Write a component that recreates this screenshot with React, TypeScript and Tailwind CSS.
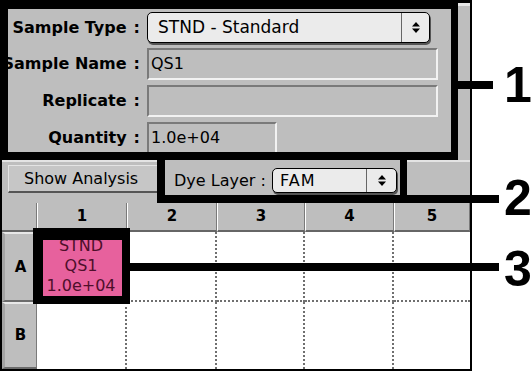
import React from 'react';

function Arrows() {
  return (
    <svg width="8" height="11" viewBox="0 0 8 11">
      <path d="M4 0 L8 4.5 H0 Z" fill="#000" />
      <path d="M4 11 L8 6.5 H0 Z" fill="#000" />
    </svg>
  );
}

interface PopupProps {
  value: string;
  size: string;
  arrowW: string;
  textClass?: string;
}

function Popup({ value, size, arrowW, textClass = '' }: PopupProps) {
  return (
    <div className={`${size} flex rounded-[5px] border-[1.5px] border-black bg-[#ebebeb] shadow-[1px_2px_0_#555] overflow-hidden`}>
      <div className={`flex-1 flex items-center whitespace-nowrap ${textClass}`}>{value}</div>
      <div className={`${arrowW} border-l border-[#666] flex items-center justify-center`}>
        <Arrows />
      </div>
    </div>
  );
}

function Field({ value, w }: { value?: string; w: string }) {
  return (
    <div
      className={`${w} h-[32px] shrink-0 border-2 border-t-[#7a7a7a] border-l-[#7a7a7a] border-b-[#f2f2f2] border-r-[#f2f2f2] flex items-center pl-[2px] text-[16px]`}
    >
      {value}
    </div>
  );
}

function Row({ label, children }: { label: string; children: React.ReactNode }) {
  return (
    <div className="flex items-center shrink-0">
      <div className="w-[132px] shrink-0 flex justify-end whitespace-nowrap font-bold text-[16px]">
        <span>{label}</span>
        <span className="ml-[7px]">:</span>
      </div>
      <div className="ml-[7px]">{children}</div>
    </div>
  );
}

const cols = ['1', '2', '3', '4', '5'];

export default function App() {
  return (
    <div className="relative w-[532px] h-[371px] bg-white flex overflow-hidden font-['DejaVu_Sans',sans-serif] text-black">
      {/* screenshot */}
      <div className="w-[472px] h-[371px] flex flex-col bg-[#bebebe] border-l-2 border-r-2 border-b-2 border-black">
        {/* sample settings panel */}
        <div className="flex h-[160px] shrink-0">
          <div className="w-[456px] h-[160px] border-t-[9px] border-l-[6px] border-r-[7px] border-b-[8px] border-black bg-[#bebebe] overflow-hidden flex flex-col pt-[3px] gap-[5px]">
            <Row label="Sample Type">
              <Popup
                value="STND - Standard"
                size="w-[283px] h-[31px]"
                arrowW="w-[28px]"
                textClass="pl-[10px] text-[17px]"
              />
            </Row>
            <Row label="Sample Name">
              <Field value="QS1" w="w-[291px]" />
            </Row>
            <Row label="Replicate">
              <Field w="w-[291px]" />
            </Row>
            <Row label="Quantity">
              <Field value="1.0e+04" w="w-[130px]" />
            </Row>
          </div>
          <div className="flex-1 border-t-[3px] border-black">
            <div className="h-[3px] bg-[#e8e8e8]" />
          </div>
        </div>

        {/* toolbar */}
        <div className="flex h-[43px] shrink-0">
          <div className="w-[155px] pl-[6px] pt-[3px] border-t-2 border-t-[#e4e4e4]">
            <div className="h-[28px] border-t border-l border-t-[#e4e4e4] border-l-[#e4e4e4] border-b-2 border-b-[#555] bg-[#c6c6c6] pl-[15px] flex items-center text-[16px] whitespace-nowrap">
              Show Analysis
            </div>
          </div>
          <div className="w-[250px] border-l-[8px] border-r-[7px] border-b-[8px] border-black pt-[8px] pl-[9px]">
            <div className="flex items-center h-[25px]">
              <div className="w-[98px] text-[16px] whitespace-nowrap">Dye Layer :</div>
              <Popup
                value="FAM"
                size="w-[125px] h-[25px]"
                arrowW="w-[30px]"
                textClass="tracking-[1px] pl-[7px] text-[16px]"
              />
            </div>
          </div>
          <div className="flex-1 border-t-2 border-t-[#e4e4e4]" />
        </div>

        {/* plate grid */}
        <div className="relative flex-1 grid grid-cols-[35px_90px_90px_88px_89px_1fr] grid-rows-[29px_70px_1fr]">
          <div className="bg-[#bebebe] border-b-2 border-b-[#666] border-r border-r-[#7a7a7a]" />
          {cols.map((c) => (
            <div
              key={c}
              className="bg-[#bebebe] border-l border-l-white border-r border-r-[#7a7a7a] border-b-2 border-b-[#666] flex items-center justify-center font-bold text-[15px]"
            >
              {c}
            </div>
          ))}

          {['A', 'B'].map((r, ri) => (
            <React.Fragment key={r}>
              <div className="bg-[#bebebe] border-t-2 border-t-[#e8e8e8] border-b-2 border-b-[#6b6b6b] border-r border-r-[#7a7a7a] border-l-[3px] border-l-[#a4a4a4] flex items-center justify-center font-bold text-[15px]">
                {r}
              </div>
              {cols.map((c, ci) => {
                const isLast = ci === cols.length - 1;
                const borders = `${isLast ? '' : 'border-r-2'} ${ri === 0 ? 'border-b-2' : ''} border-dotted border-[#6f6f6f]`;
                if (r === 'A' && c === '1') {
                  return (
                    <div
                      key={c}
                      className={`bg-[#e7619d] ${borders} flex flex-col items-center justify-center text-[16px] leading-[20px] text-[#4e0f2b]`}
                    >
                      <span>STND</span>
                      <span>QS1</span>
                      <span>1.0e+04</span>
                    </div>
                  );
                }
                return <div key={c} className={`bg-white ${borders}`} />;
              })}
            </React.Fragment>
          ))}

          {/* callout box 3 */}
          <div className="absolute left-[31px] top-[25px] w-[97px] h-[76px] border-l-[10px] border-t-[12px] border-r-[8px] border-b-[8px] border-black" />
        </div>
      </div>

      {/* callout lines and numbers */}
      <div className="absolute left-[456px] top-[81px] w-[37px] h-[8px] bg-black" />
      <div className="absolute left-[405px] top-[195px] w-[94px] h-[8px] bg-black" />
      <div className="absolute left-[128px] top-[263px] w-[371px] h-[8px] bg-black" />

      <div className="absolute left-[504px] top-[60px] w-[28px] text-center font-['Liberation_Sans',Arial,sans-serif] font-bold text-[50px] leading-[50px]">
        1
      </div>
      <div className="absolute left-[504px] top-[173px] w-[28px] text-center font-['Liberation_Sans',Arial,sans-serif] font-bold text-[50px] leading-[50px]">
        2
      </div>
      <div className="absolute left-[504px] top-[244px] w-[28px] text-center font-['Liberation_Sans',Arial,sans-serif] font-bold text-[50px] leading-[50px]">
        3
      </div>
    </div>
  );
}
